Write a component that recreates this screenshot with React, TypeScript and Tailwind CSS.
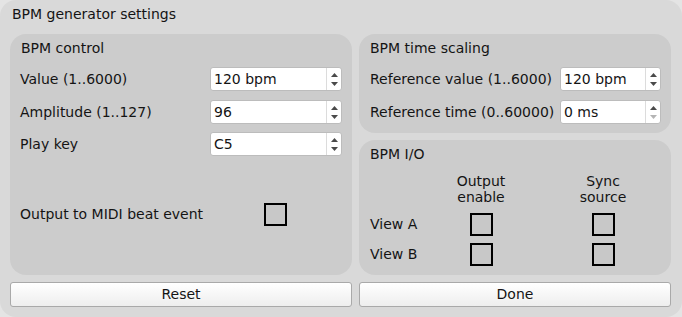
import React from "react";

const font = { fontFamily: '"DejaVu Sans", Verdana, sans-serif' };

const SpinBox = ({ value, width, downDisabled }: { value: string; width: string; downDisabled?: boolean }) => (
  <div className={`${width} h-[24px] flex bg-white border border-[#bcbcbc] rounded-[3px]`}>
    <div className="flex-1 flex items-center pl-[3px] text-[14px] text-[#141414]">{value}</div>
    <div className="w-[15px] border-l border-[#dcdcdc] flex flex-col items-center justify-center gap-[5px]">
      <svg width="7" height="4" viewBox="0 0 7 4">
        <path d="M3.5 0 L7 4 L0 4 Z" fill="#4a4a4a" />
      </svg>
      <svg width="7" height="4" viewBox="0 0 7 4">
        <path d="M0 0 L7 0 L3.5 4 Z" fill={downDisabled ? "#b4b4b4" : "#4a4a4a"} />
      </svg>
    </div>
  </div>
);

const CheckBox = () => (
  <div className="w-[23px] h-[23px] border-2 border-black bg-[#c8c8c8]" />
);

const Row = ({ label, children }: { label: string; children: React.ReactNode }) => (
  <div className="flex items-center justify-between h-[24px]">
    <span className="text-[14px] text-[#141414]">{label}</span>
    {children}
  </div>
);

const Button = ({ label, width }: { label: string; width: string }) => (
  <button className={`${width} h-[25px] rounded-[3px] border border-[#a9a9a9] bg-gradient-to-b from-[#ffffff] to-[#eeeeee] text-[14px] text-[#141414]`}>
    {label}
  </button>
);

export default function App() {
  return (
    <div className="w-[682px] h-[317px] bg-[#e4e4e4]" style={font}>
      <div className="w-full h-full bg-[#d9d9d9] rounded-[16px] px-[10px] flex flex-col">
        <div className="h-[34px] pl-[2px] pt-[4px] text-[14px] text-[#141414]">BPM generator settings</div>

        <div className="flex gap-[7px] h-[241px]">
          {/* BPM control */}
          <div className="w-[342px] bg-[#cccccc] rounded-[16px] px-[10px] flex flex-col">
            <div className="h-[26px] pl-[1px] pt-[4px] text-[14px] text-[#141414]">BPM control</div>
            <div className="mt-[7px] flex flex-col gap-[8px]">
              <Row label="Value (1..6000)">
                <SpinBox value="120 bpm" width="w-[132px]" />
              </Row>
              <div className="mt-[1px]">
                <Row label="Amplitude (1..127)">
                  <SpinBox value="96" width="w-[132px]" />
                </Row>
              </div>
              <Row label="Play key">
                <SpinBox value="C5" width="w-[132px]" />
              </Row>
            </div>
            <div className="mt-[46px] flex items-center h-[24px]">
              <span className="w-[244px] text-[14px] text-[#141414]">Output to MIDI beat event</span>
              <CheckBox />
            </div>
          </div>

          <div className="w-[312px] flex flex-col gap-[7px]">
            {/* BPM time scaling */}
            <div className="h-[99px] bg-[#cccccc] rounded-[16px] pl-[11px] pr-[10px] flex flex-col">
              <div className="h-[26px] pt-[4px] text-[14px] text-[#141414]">BPM time scaling</div>
              <div className="mt-[7px] flex flex-col gap-[9px]">
                <Row label="Reference value (1..6000)">
                  <SpinBox value="120 bpm" width="w-[101px]" />
                </Row>
                <Row label="Reference time (0..60000)">
                  <SpinBox value="0 ms" width="w-[101px]" downDisabled />
                </Row>
              </div>
            </div>

            {/* BPM I/O */}
            <div className="flex-1 bg-[#cccccc] rounded-[16px] pl-[11px] flex flex-col">
              <div className="h-[33px] pt-[4px] text-[14px] text-[#141414]">BPM I/O</div>
              <div className="flex text-[14px] text-[#141414] leading-[16px] text-center">
                <div className="w-[70px]" />
                <div className="w-[82px]">Output<br />enable</div>
                <div className="w-[40px]" />
                <div className="w-[82px]">Sync<br />source</div>
              </div>
              <div className="mt-[7px] flex flex-col gap-[6px]">
                {["View A", "View B"].map((v) => (
                  <div key={v} className="flex items-center h-[24px] text-[14px] text-[#141414]">
                    <div className="w-[70px]">{v}</div>
                    <div className="w-[82px] flex justify-center">
                      <CheckBox />
                    </div>
                    <div className="w-[40px]" />
                    <div className="w-[82px] flex justify-center">
                      <CheckBox />
                    </div>
                  </div>
                ))}
              </div>
            </div>
          </div>
        </div>

        <div className="mt-[7px] flex gap-[7px]">
          <Button label="Reset" width="w-[342px]" />
          <Button label="Done" width="w-[312px]" />
        </div>
      </div>
    </div>
  );
}
